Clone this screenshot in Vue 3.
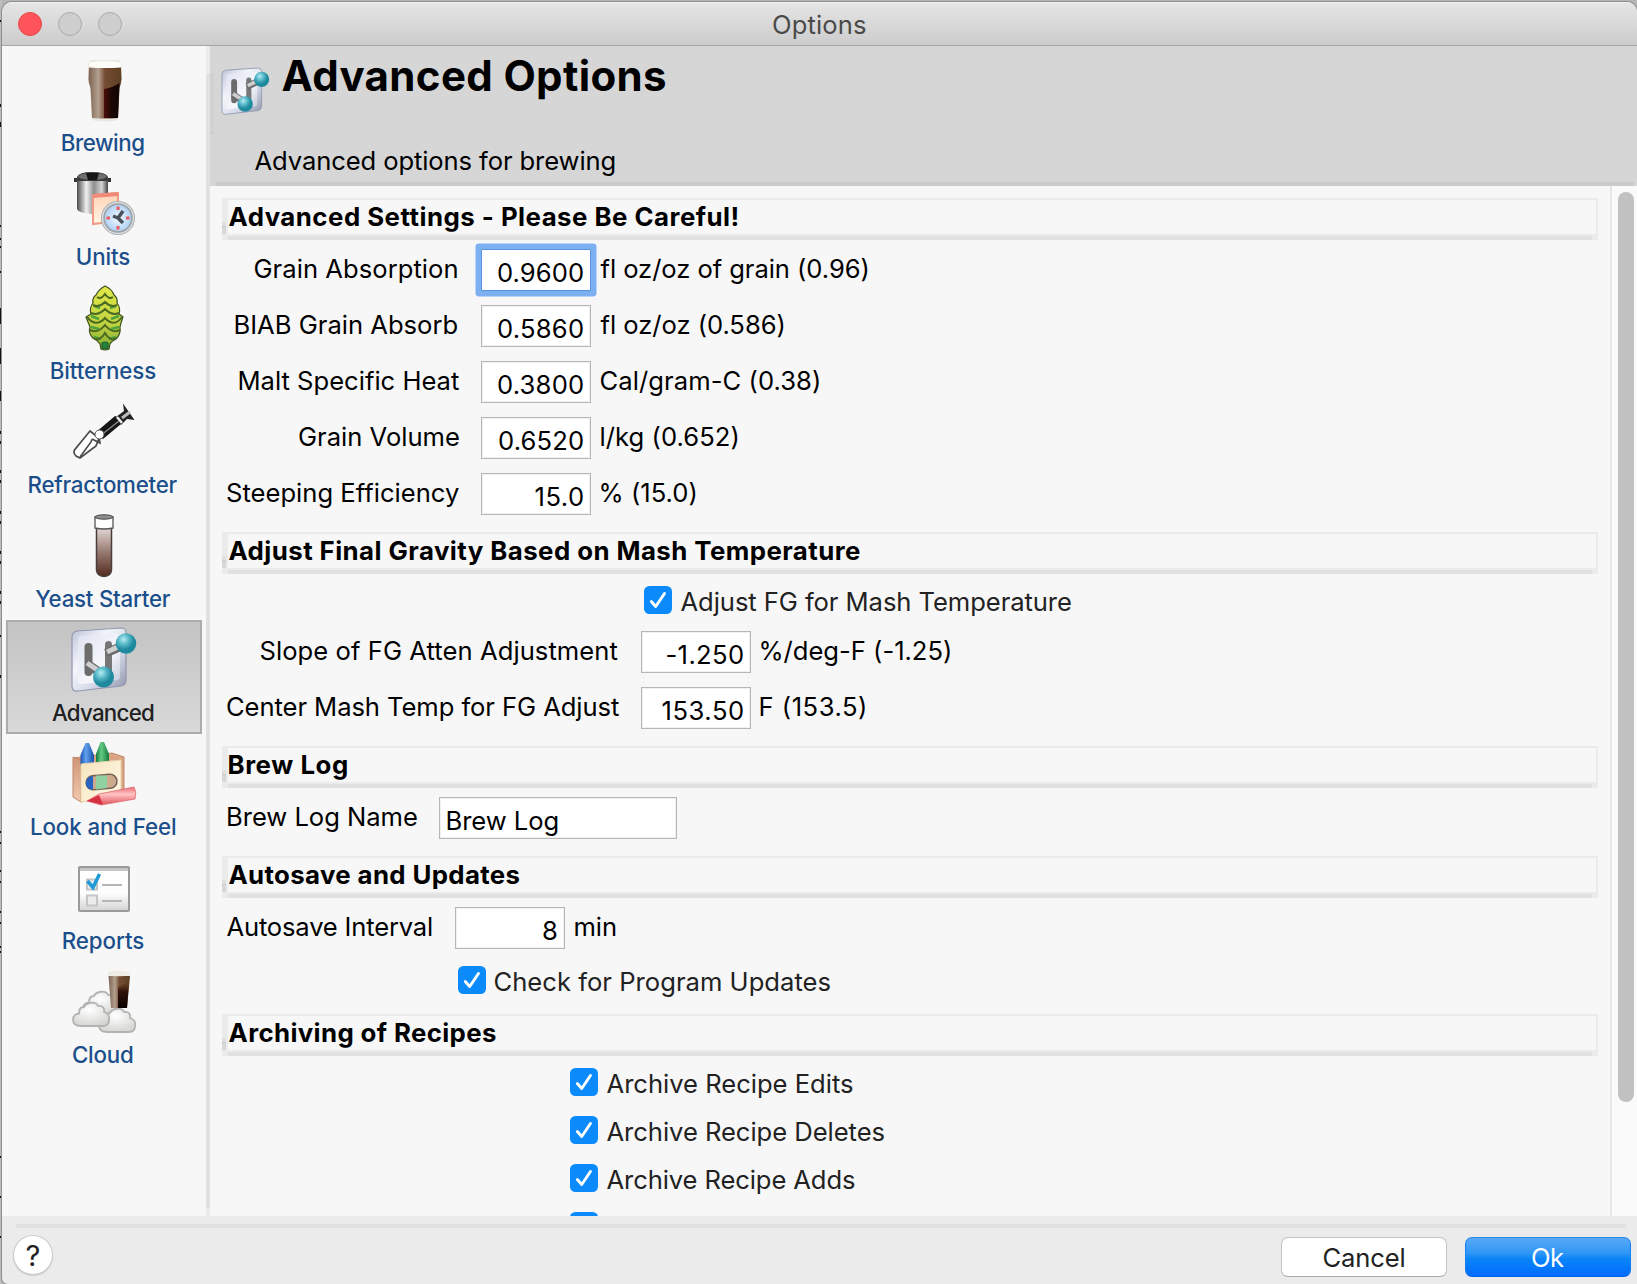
<script setup>
const sidebar = [
  { id: 'brewing', label: 'Brewing', w: 82.5 },
  { id: 'units', label: 'Units', w: 52.5 },
  { id: 'bitterness', label: 'Bitterness', w: 104.5 },
  { id: 'refractometer', label: 'Refractometer', w: 149 },
  { id: 'yeast', label: 'Yeast Starter', w: 135.5 },
  { id: 'advanced', label: 'Advanced', w: 102, active: true },
  { id: 'look', label: 'Look and Feel', w: 144 },
  { id: 'reports', label: 'Reports', w: 80.5 },
  { id: 'cloud', label: 'Cloud', w: 60 },
]

const sections = [
  {
    title: 'Advanced Settings - Please Be Careful!', w: 509, labelWidth: 232,
    rows: [
      { label: 'Grain Absorption', lw: 203, inset: 1.5, value: '0.9600', vw: 85, unit: 'fl oz/oz of grain (0.96)', uw: 267 },
      { label: 'BIAB Grain Absorb', lw: 222, inset: 1.5, value: '0.5860', vw: 85, unit: 'fl oz/oz (0.586)', uw: 183 },
      { label: 'Malt Specific Heat', lw: 219.5, value: '0.3800', vw: 85, unit: 'Cal/gram-C (0.38)', uw: 218.5 },
      { label: 'Grain Volume', lw: 160, value: '0.6520', vw: 84, unit: 'l/kg (0.652)', uw: 137 },
      { label: 'Steeping Efficiency', lw: 232, value: '15.0', vw: 47.5, unit: '% (15.0)', uw: 95 },
    ],
  },
  {
    title: 'Adjust Final Gravity Based on Mash Temperature', w: 631.5, labelWidth: 392,
    rows: [
      { check: 'Adjust FG for Mash Temperature', w: 390.5, indent: 417, gap: 'below' },
      { label: 'Slope of FG Atten Adjustment', lw: 357, inset: 1.5, value: '-1.250', vw: 76.5, unit: '%/deg-F (-1.25)', uw: 189.5 },
      { label: 'Center Mash Temp for FG Adjust', lw: 392, value: '153.50', vw: 80.5, unit: 'F (153.5)', uw: 104.5 },
    ],
  },
  {
    title: 'Brew Log', w: 118.5, labelWidth: 190,
    rows: [{ label: 'Brew Log Name', lw: 189, value: 'Brew Log', vw: 110, wide: true }],
  },
  {
    title: 'Autosave and Updates', w: 291, labelWidth: 206,
    rows: [
      { label: 'Autosave Interval', lw: 205.5, inset: 1, value: '8', unit: 'min', uw: 41.5 },
      { check: 'Check for Program Updates', w: 336, indent: 231, gap: 'above' },
    ],
  },
  {
    title: 'Archiving of Recipes', w: 267.5, labelWidth: 0,
    rows: [
      { check: 'Archive Recipe Edits', w: 246.5, indent: 343 },
      { check: 'Archive Recipe Deletes', w: 278, indent: 343 },
      { check: 'Archive Recipe Adds', w: 248.5, indent: 343 },
      { check: '', indent: 343 },
    ],
  },
]
sections[0].rows[0].focused = true

// Tracks a label out to the given width and trims its side bearings,
// so labels and fields line up on the visible edges of the text.
const ctx = document.createElement('canvas').getContext('2d')
function fit(el, width) {
  const s = getComputedStyle(el)
  ctx.font = `${s.fontWeight} ${s.fontSize} ${s.fontFamily}`
  const text = el.textContent
  const m = ctx.measureText(text)
  const ink = m.actualBoundingBoxLeft + m.actualBoundingBoxRight
  const gap = width && text.length > 1 ? (width - ink) / (text.length - 1) : 0
  el.style.letterSpacing = `${gap}px`
  el.style.marginLeft = `${m.actualBoundingBoxLeft}px`
  el.style.marginRight = `${m.actualBoundingBoxRight - m.width - gap}px`
}
const vFit = { mounted: (el, { value }) => fit(el, value) }

const marks = [[20, 2], [104, 3], [122, 5], [225, 2], [238, 2], [246, 2], [271, 2], [308, 16], [348, 16], [391, 10], [431, 3], [441, 3], [470, 3], [480, 3], [511, 3], [521, 3], [551, 3], [561, 3], [591, 3], [601, 3], [635, 2], [675, 3], [831, 2], [842, 2], [870, 2], [881, 2], [911, 2], [922, 2], [946, 2], [951, 2], [1156, 2], [1196, 2], [1236, 2]]
</script>

<template>
  <div class="screen">
    <div class="behind">
      <i v-for="m in marks" :key="m[0]" :style="{ top: m[0] + 'px', height: m[1] + 'px' }"></i>
    </div>
    <svg class="defs" width="0" height="0">
      <defs>
        <linearGradient id="beer" x1="0" x2="1"><stop offset="0" stop-color="#7c6250" /><stop offset=".3" stop-color="#b3a08f" /><stop offset=".5" stop-color="#754c33" /><stop offset="1" stop-color="#5d4023" /></linearGradient>
        <linearGradient id="stout" x1="0" x2="0" y1="0" y2="1"><stop offset="0" stop-color="#5c3619" stop-opacity=".2" /><stop offset=".35" stop-color="#2a0d06" stop-opacity=".9" /><stop offset="1" stop-color="#080000" /></linearGradient>
        <linearGradient id="shade" x1="0" x2="1"><stop offset="0" stop-color="#4a0a08" /><stop offset=".5" stop-color="#140302" /><stop offset="1" stop-color="#0b0100" /></linearGradient>
        <linearGradient id="steel" x1="0" x2="1"><stop offset="0" stop-color="#4b4b4b" /><stop offset=".3" stop-color="#f1f1f1" /><stop offset=".55" stop-color="#8d8d8d" /><stop offset=".8" stop-color="#d6d6d6" /><stop offset="1" stop-color="#444" /></linearGradient>
        <linearGradient id="note" x1="0" x2="0" y1="0" y2="1"><stop offset="0" stop-color="#ffd2b4" /><stop offset="1" stop-color="#fff5e6" /></linearGradient>
        <radialGradient id="dial"><stop offset="0" stop-color="#f4faff" /><stop offset="1" stop-color="#a7cdf3" /></radialGradient>
        <linearGradient id="hop" x1="0" x2="0" y1="0" y2="1"><stop offset="0" stop-color="#e2e84a" /><stop offset=".6" stop-color="#c0d23f" /><stop offset="1" stop-color="#7fae35" /></linearGradient>
        <linearGradient id="tube" x1="0" x2="0" y1="0" y2="1"><stop offset="0" stop-color="#e6dcd9" /><stop offset=".5" stop-color="#987b71" /><stop offset="1" stop-color="#522a20" /></linearGradient>
        <linearGradient id="plate" x1="0" x2="1" y1="0" y2="1"><stop offset="0" stop-color="#bcc2d6" /><stop offset=".35" stop-color="#f3f5fb" /><stop offset=".65" stop-color="#d4d9e8" /><stop offset="1" stop-color="#8c91a8" /></linearGradient>
        <linearGradient id="face" x1="0" x2="1" y1="0" y2="1"><stop offset="0" stop-color="#dfe3f0" /><stop offset=".6" stop-color="#f6f7fc" /><stop offset="1" stop-color="#c3c8da" /></linearGradient>
        <radialGradient id="ball" cx=".38" cy=".3"><stop offset="0" stop-color="#b9edf4" /><stop offset=".45" stop-color="#62bfce" /><stop offset="1" stop-color="#1f8a9e" /></radialGradient>
        <linearGradient id="blue" x1="0" x2="1"><stop offset="0" stop-color="#1b55b5" /><stop offset=".4" stop-color="#62a2ee" /><stop offset="1" stop-color="#174ea8" /></linearGradient>
        <linearGradient id="green" x1="0" x2="1"><stop offset="0" stop-color="#127a3c" /><stop offset=".4" stop-color="#64ca83" /><stop offset="1" stop-color="#127a3c" /></linearGradient>
        <linearGradient id="carton" x1="0" x2="1" y1="0" y2="1"><stop offset="0" stop-color="#f6e3bd" /><stop offset="1" stop-color="#fffbe8" /></linearGradient>
        <linearGradient id="side" x1="0" x2="0" y1="0" y2="1"><stop offset="0" stop-color="#cf9677" /><stop offset="1" stop-color="#f0c9ae" /></linearGradient>
        <linearGradient id="red" x1="0" x2="0" y1="0" y2="1"><stop offset="0" stop-color="#ea6a72" /><stop offset=".4" stop-color="#ffc4c4" /><stop offset="1" stop-color="#e0505b" /></linearGradient>
        <linearGradient id="sheet" x1="0" x2="0" y1="0" y2="1"><stop offset="0" stop-color="#fff" /><stop offset=".6" stop-color="#fdfdfd" /><stop offset="1" stop-color="#d3d3d3" /></linearGradient>
        <radialGradient id="puff" cx=".45" cy=".3" r=".7"><stop offset="0" stop-color="#fff" /><stop offset="1" stop-color="#d6d6d4" /></radialGradient>
        <g id="switches">
          <path d="M5 3 49 0Q54 0 54 5V52Q54 57 49 58L6 63Q0 64 0 58V9Q0 4 5 3Z" fill="url(#plate)" stroke="#9297af" stroke-width="1.200" />
          <path d="M9 8 45 5.500Q48 6 48 9V49Q48 51 46 52L9 56Q6 56 6 54V11Q6 9 9 8Z" fill="url(#face)" />
          <rect x="12.500" y="15" width="8" height="33" rx="4" fill="#6c6c6c" /><rect x="33" y="13" width="7" height="32" rx="3.500" fill="#777" />
          <path d="M15 36 30 46" stroke="#6b6b6b" stroke-width="9" /><path d="M15 35 30 45" stroke="#cfcfcf" stroke-width="5" />
          <path d="M34 25 50 18" stroke="#6b6b6b" stroke-width="9" /><path d="M35 24 50 17" stroke="#cfcfcf" stroke-width="5" />
          <circle cx="31.500" cy="49" r="10.500" fill="url(#ball)" /><circle cx="54" cy="15.500" r="10.300" fill="url(#ball)" />
        </g>
        <path id="cloudshape" d="M8 24C2 24 0 21 0 17.500C0 14 3 11.500 6 11.500C6 7 8 5 11 5C13 0 23 -1 25 4C29 3 32 6 31 10C35 11 37 14 36 18C36 22 34 24 30 24Z" />
      </defs>
    </svg>

    <div class="window">
      <header class="titlebar">
        <div class="lights"><b class="close"></b><b></b><b></b></div>
        <span v-fit="93">Options</span>
      </header>

      <div class="body">
        <nav class="sidebar">
          <a v-for="item in sidebar" :key="item.id" class="item" :class="{ active: item.active }">
            <svg width="64" height="64" viewBox="0 0 64 64">
              <g v-if="item.id === 'brewing'">
                <path d="M16 6Q16 2 21 2H45Q49.500 2 49.500 6L50 21Q50 26 48 30L46 62Q33 65 20 62L18 30Q16 25 16 21Z" fill="#e9e7e4" />
                <path d="M17 9H49L49.500 21Q49 26 47.500 30L46 60Q33 61 20 60L18.500 30Q16.500 25 16.500 21Z" fill="url(#beer)" />
                <path d="M32 31Q40 30 47.500 25L46 60H32Z" fill="url(#shade)" opacity=".93" />
                <path d="M17 4.500Q33 2 49 4.500V9.500Q33 10.500 17 9.500Z" fill="#fffdf8" />
              </g>
              <g v-else-if="item.id === 'units'">
                <path d="M2 8H7M34 8H39" stroke="#333" stroke-width="4" />
                <path d="M5 5H36V37Q35 41 20 42Q6 41 5 37Z" fill="url(#steel)" />
                <path d="M5 5Q7 0 20 0Q34 0 36 5L35 9H6Z" fill="#3a3a3a" /><ellipse cx="20.500" cy="4.500" rx="14" ry="3.500" fill="#6f6f6f" /><path d="M14 1H27L25 8H16Z" fill="#161616" />
                <path d="M21 23 46 21V49L21 52Z" fill="url(#note)" stroke="#f09a86" stroke-width="2" /><path d="M21 24 46 22" stroke="#f08a78" stroke-width="4" />
                <circle cx="46" cy="46" r="15" fill="url(#dial)" stroke="#a0a5a9" stroke-width="4" /><circle cx="46" cy="46" r="15.500" fill="none" stroke="#d9dde0" stroke-width="1.500" />
                <path d="M46 34.500v3.500M46 54v3.500M34.500 46h3.500M54 46h3.500" stroke="#ec5a60" stroke-width="3" />
                <path d="M51 39 46 46 51 51M46 46 41 44" stroke="#47515b" stroke-width="3.500" fill="none" />
              </g>
              <g v-else-if="item.id === 'bitterness'" stroke="#3c5220" stroke-width="1.200">
                <path d="M33 0Q40 3 42 9Q46 12 45 17Q49 22 47 28L51 31Q49 36 48 41Q49 48 44 53Q40 55 38 58L37 63Q33 65 29 63L28 58Q25 54 21 52Q16 47 18 41Q16 36 14 31L19 28Q17 22 21 17Q20 12 24 9Q27 3 33 0Z" fill="url(#hop)" />
                <path d="M22 20 28 22M44 20 38 22M19 30 27 33M47 30 39 33M19 41 27 43M47 41 39 43M22 51 29 53M44 51 37 53" stroke="#4ca23d" stroke-width="2.500" />
                <path d="M25 11Q29 14 33 8Q37 14 41 11M21 19Q27 22 33 16Q39 22 45 19M19 27Q26 30 33 23Q40 30 47 27M15 31Q24 42 33 32Q42 42 50 31M18 44Q26 48 33 39Q40 48 48 44M21 52Q28 56 33 47Q38 56 44 52" fill="none" stroke="#4d6a22" stroke-width="2" />
                <path d="M30 57Q33 55 36 57V62Q33 63 30 62Z" fill="#238542" stroke="#23602b" />
              </g>
              <g v-else-if="item.id === 'refractometer'">
                <path d="M18 31 2.500 50Q1 53 4 56L8 58 24 46 27 38Z" fill="#fff" stroke="#4a4a4a" stroke-width="1.700" /><path d="M8 57 19 42Q20 38 22 40L28 43 27 36" fill="none" stroke="#4a4a4a" stroke-width="1.600" />
                <path d="M23 33 43 16Q49 18 49 24L31 39Z" fill="#161616" /><path d="M28 36 47 21" stroke="#888" stroke-width="1.500" />
                <circle cx="27.500" cy="34.500" r="4.500" fill="#fff" stroke="#555" />
                <path d="M44 17 52 11 51 3.500 62.500 20 55 19 49 25Z" fill="#222" /><path d="M45 17 50 23" stroke="#eee" stroke-width="2.500" /><path d="M50 18 58 12" stroke="#bbb" stroke-width="3" />
              </g>
              <g v-else-if="item.id === 'yeast'">
                <path d="M24.500 13V56Q25 62 32 62.500Q39 62 39.500 56V13Z" fill="url(#tube)" stroke="#493e3b" stroke-width="1.500" />
                <path d="M23 3V14Q32 16 41 14V3Z" fill="#fff" stroke="#555" stroke-width="1.300" /><ellipse cx="32" cy="3" rx="9" ry="2.200" fill="#8d8d8d" stroke="#444" />
              </g>
              <use v-else-if="item.id === 'advanced'" href="#switches" />
              <g v-else-if="item.id === 'look'">
                <path d="M1 16 40 11 52 15V50L9 60V18Z" fill="#d9a384" stroke="#c08b6c" /><path d="M1 15 9 18V60L1 55Z" fill="url(#side)" stroke="#c08566" />
                <path d="M8.500 13 13.500 1H17L22 13V24H8.500Z" fill="url(#blue)" /><path d="M24 12 28.500 0H32L37 12V22H24Z" fill="url(#green)" />
                <path d="M9 22 49 18V54L9 60Z" fill="url(#carton)" stroke="#ead3ac" />
                <rect x="14" y="33" width="31" height="14" rx="7" fill="#cda98e" stroke="#746355" stroke-width="1.500" transform="rotate(-5 29 40)" />
                <path d="M21 34V47.500Q14 48 14 41Q14 35 21 34Z" fill="#2763c0" /><path d="M24 33.500H35V46L24 47.500Z" fill="#8fd2a0" />
                <path d="M15 59 27 52 62 45Q65 50 63 57L29 63Z" fill="url(#red)" stroke="#df6c74" stroke-width=".8" /><path d="M15 59 27 53 31 62.500Z" fill="#d52f40" />
              </g>
              <g v-else-if="item.id === 'reports'">
                <rect x="7" y="11" width="50" height="44" rx="1" fill="url(#sheet)" stroke="#9a9a9a" stroke-width="2" /><path d="M8 13.500H56" stroke="#c6c6c6" stroke-width="3" />
                <path d="M15 23.500H25V33.500H15ZM15 39.500H25V49.500H15Z" fill="#ececec" stroke="#c5c5c5" stroke-width="2" />
                <path d="M30 29H50M30 45H50" stroke="#b5b5b5" stroke-width="2" />
                <path d="M15.500 25 21 31.500 27.500 18" fill="none" stroke="#1f9ad6" stroke-width="3.500" />
              </g>
              <g v-else stroke="#b3b3b1" stroke-width="1.800" fill="url(#puff)">
                <use href="#cloudshape" transform="translate(11 21)" />
                <use href="#cloudshape" transform="translate(27 38)" />
                <use href="#cloudshape" transform="translate(1 32)" />
                <g stroke="none"><path d="M36.500 6H58L55 38H39Z" fill="url(#beer)" /><path d="M46 17 57 12 55 38H46Z" fill="url(#stout)" /><path d="M36 2Q47 -1 58 2V5.500Q47 7 36 5.500Z" fill="#efece6" /></g>
              </g>
            </svg>
            <span v-fit="item.w">{{ item.label }}</span>
          </a>
        </nav>
        <div class="divider"></div>

        <main class="main">
          <header class="head">
            <div class="head-row">
              <svg width="47" height="47" viewBox="0 0 64 64"><use href="#switches" /></svg>
              <h1><span v-fit="382.5">Advanced Options</span></h1>
            </div>
            <p><span v-fit="360">Advanced options for brewing</span></p>
          </header>

          <div class="scroll">
            <div class="content">
              <section v-for="s in sections" :key="s.title">
                <h2><span v-fit="s.w">{{ s.title }}</span></h2>
                <div class="rows" :class="{ checks: s.rows[0].check }">
                  <template v-for="(r, i) in s.rows" :key="i">
                    <label v-if="r.check !== undefined" class="check" :class="r.gap" :style="{ marginLeft: r.indent + 'px' }">
                      <svg width="28" height="28" viewBox="0 0 28 28"><rect width="28" height="28" rx="5.500" fill="#0a8afb" /><path d="M7.300 15.500 11.700 20.500 20.500 7.500" fill="none" stroke="#fff" stroke-width="2.900" stroke-linecap="round" stroke-linejoin="round" /></svg>
                      <span v-if="r.check" v-fit="r.w">{{ r.check }}</span>
                    </label>
                    <div v-else class="row">
                      <div class="label" :style="{ width: s.labelWidth + 'px', paddingRight: (r.inset || 0) + 'px' }"><span v-fit="r.lw">{{ r.label }}</span></div>
                      <div class="field" :class="{ wide: r.wide, focused: r.focused }"><span v-fit="r.vw">{{ r.value }}</span></div>
                      <div v-if="r.unit" class="unit"><span v-fit="r.uw">{{ r.unit }}</span></div>
                    </div>
                  </template>
                </div>
              </section>
            </div>
            <div class="track"><div class="thumb"></div></div>
          </div>
        </main>
      </div>

      <footer class="footer">
        <div class="rule"></div>
        <div class="actions">
          <button class="help">?</button>
          <button class="btn"><span v-fit="81">Cancel</span></button>
          <button class="btn primary"><span v-fit="32">Ok</span></button>
        </div>
      </footer>
    </div>
  </div>
</template>

<style>
body { background: #b5b5b5; overflow: hidden; }
</style>

<style scoped>
* { box-sizing: border-box; }
.screen { position: relative; width: 1637px; height: 1284px; padding: 2px 0 0 2px; overflow: hidden; background: #b5b5b5; font: 25.6px Inter, "Liberation Sans", sans-serif; color: #000; }
.screen span { display: inline-block; white-space: nowrap; }
.behind { position: absolute; left: 0; top: 0; width: 2px; height: 100%; background: #bcbcbc; }
.behind i { position: absolute; left: 0; width: 2px; background: #111; }
.defs { position: absolute; }
.window { position: relative; width: 1635px; height: 1282px; display: flex; flex-direction: column; background: #ebebeb; border-radius: 10px 10px 0 6px; overflow: hidden; box-shadow: 0 0 0 1px #8f8f8f; }
.titlebar { height: 44px; flex: none; display: flex; justify-content: center; background: linear-gradient(#f4f4f4 0, #e4e4e4 2px, #cdcdcd 42px); border-bottom: 1px solid #a5a5a5; color: #4a4a4a; line-height: 46px; position: relative; }
.lights { position: absolute; left: 16px; top: 10px; display: flex; gap: 16px; }
.lights b { width: 24px; height: 24px; border-radius: 50%; border: 1px solid #a9a9a9; background: #cecece; }
.lights .close { background: #ff5459; border-color: #e8474c; }
.body { height: 1170px; flex: none; display: flex; }
.sidebar { width: 204px; padding: 4px 4px 0; background: #f7f7f7; }
.item { height: 114px; display: flex; flex-direction: column; align-items: center; padding-top: 8px; font-size: 22.3px; font-weight: 500; line-height: 30px; color: #1b4f8b; }
.item svg { flex: none; overflow: visible; filter: blur(.45px); }
.item span { margin-top: 5px; translate: -1px 0.5px; }
.active { color: #202020; background: linear-gradient(#c3c3c3, #d9d9d9); box-shadow: inset 0 0 0 2px #acacac; }
.divider { width: 4px; background: linear-gradient(#ebebeb 28px, #e1e1e1 28px, #e1e1e1 1162px, #ebebeb 1162px); }
.main { flex: 1; display: flex; flex-direction: column; min-width: 0; background: #f7f7f7; }
.head { height: 140px; flex: none; position: relative; background: #d6d6d6; }
.head::before { content: ""; position: absolute; left: 0; top: 28px; width: 4px; height: 58px; background: #d1d1d1; border-top: 1px solid #c9c9c9; border-bottom: 1px solid #c9c9c9; }
.head::after { content: ""; position: absolute; left: 6px; right: 3px; bottom: 0; height: 4px; background: #cbcbcb; }
.head-row { display: flex; padding: 0 0 0 12px; height: 96px; }
.head-row svg { margin-top: 22px; filter: blur(.4px); overflow: visible; }
h1 { margin: 0 0 0 13.5px; font-size: 42px; line-height: 60px; font-weight: 700; }
.head p { margin: 0; padding-left: 44.5px; line-height: 38px; }
.scroll { height: 1030px; display: flex; overflow: hidden; }
.content { flex: 1; padding: 12px 12px 0; min-width: 0; }
.track { width: 27px; border-left: 2px solid #e7e7e7; background: #fafafa; padding: 6px 0 0 6px; }
.thumb { width: 16px; height: 910px; border-radius: 8px; background: #c1c1c1; }
h2 { position: relative; margin: 0; height: 42px; padding-left: .5px; border: solid #ebebeb; border-width: 2px 2px 6px 6px; font-size: 25.8px; line-height: 34px; font-weight: 700; }
h2::before { content: ""; position: absolute; left: -6px; top: 22px; width: 4px; height: 12px; background: linear-gradient(#e0e0e0 4px, #c9c9c9 4px, #c9c9c9 5px, #d8d8d8 5px); }
h2::after { content: ""; position: absolute; left: 0; right: 4px; bottom: -6px; height: 4px; background: #e1e1e1; }
.rows { display: flex; flex-direction: column; gap: 14px; padding: 9px 0 17px 5px; }
.rows.checks { padding-top: 12px; }
.row { display: flex; height: 42px; }
.label { flex: none; display: flex; justify-content: flex-end; line-height: 40px; }
.field { width: 110px; margin-left: 22px; display: flex; justify-content: flex-end; padding-right: 7px; background: #fff; border: 1px solid #b6b6b6; box-shadow: inset 0 0 0 1px #f1f1f1; line-height: 46px; flex: none; }
.field.wide { width: 238px; justify-content: flex-start; padding-left: 7.5px; }
.field.focused { border-color: #5a93dd; box-shadow: 0 0 0 5.5px #7cb0f2; border-radius: 1px; }
.unit { margin-left: 9.5px; line-height: 40px; }
.check { display: flex; height: 28px; line-height: 32px; color: #222; }
.check svg { flex: none; margin-right: 8.5px; }
.check.below { margin-bottom: 3px; }
.check.above { margin-top: 3px; margin-bottom: 3px; }
.check + .check { margin-top: 6px; }
.footer { flex: 1; padding: 8px 11px 0 14px; }
.rule { height: 4px; background: #e1e1e1; }
.actions { display: flex; align-items: flex-start; padding-top: 9px; margin: 0 -5px 0 -2px; gap: 18px; }
button { font: inherit; padding: 0; border: 0; color: #222; background: #fff; }
.help { width: 38px; height: 38px; margin: -1px auto 0 0; border-radius: 50%; box-shadow: 0 0 0 1px #ccc, 0 1px 2px rgba(0,0,0,.4); font-size: 29px; line-height: 39px; }
.btn { width: 166px; height: 40px; border-radius: 7px; line-height: 40px; border: 1px solid #c3c3c3; border-bottom-color: #aaa; }
.primary { color: #fff; background: linear-gradient(#59a8f5, #2f97f6 40%, #0a84f8 55%, #006cff); border-color: #2b8bea #1680f0 #0063ee; }
</style>
